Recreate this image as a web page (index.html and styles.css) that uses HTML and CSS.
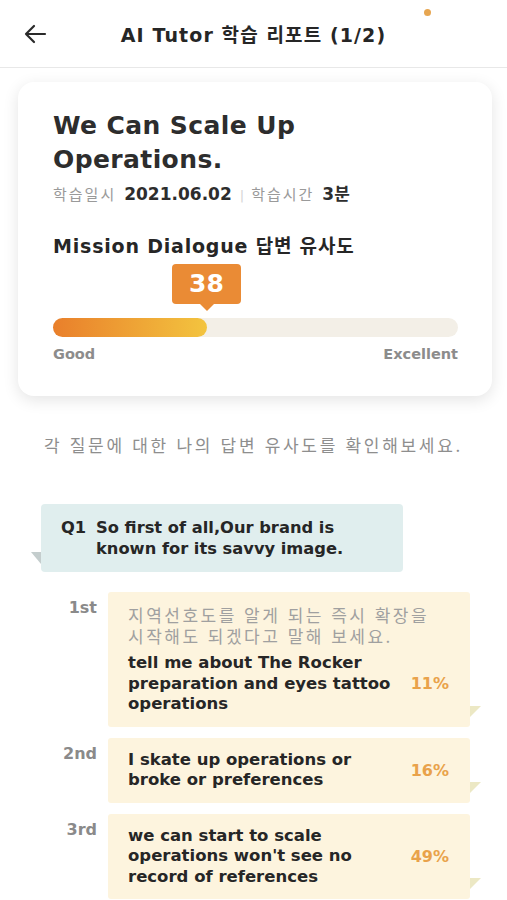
FILE: index.html
```html
<!DOCTYPE html>
<html lang="ko">
<head>
    <meta charset="UTF-8">
    <meta name="viewport" content="width=device-width, initial-scale=1.0">
    <title>AI Tutor 학습 리포트</title>
    <link rel="stylesheet" href="styles.css">
</head>
<body>
    <header class="topBar">
        <button class="backBtn" aria-label="back">
            <svg width="24" height="20" viewBox="0 0 24 20">
                <path d="M22 10H3M11 2L3 10l8 8" fill="none" stroke="#2a2a2a" stroke-width="2.2" stroke-linecap="round" stroke-linejoin="round"/>
            </svg>
        </button>
        <h1 class="topTitle">AI Tutor 학습 리포트 (1/2)</h1>
        <span class="statusDot"></span>
    </header>

    <section class="reportCard">
        <h2 class="lessonTitle">We Can Scale Up Operations.</h2>
        <div class="lessonMeta">
            <span class="metaLabel">학습일시</span>
            <span class="metaValue">2021.06.02</span>
            <span class="metaBar">|</span>
            <span class="metaLabel">학습시간</span>
            <span class="metaValue">3분</span>
        </div>

        <h3 class="scoreHeading">Mission Dialogue 답변 유사도</h3>
        <div class="meter" style="--score: 38%">
            <div class="badge">38</div>
            <div class="track">
                <div class="fill"></div>
            </div>
            <div class="meterLabels">
                <span>Good</span>
                <span>Excellent</span>
            </div>
        </div>
    </section>

    <p class="guide">각 질문에 대한 나의 답변 유사도를 확인해보세요.</p>

    <div class="question">
        <span class="qNum">Q1</span>
        <span class="qText">So first of all,Our brand is known for its savvy image.</span>
    </div>

    <div class="answers">
        <div class="answerRow">
            <span class="rank">1st</span>
            <div class="answerBox">
                <p class="hint">지역선호도를 알게 되는 즉시 확장을 시작해도 되겠다고 말해 보세요.</p>
                <div class="answerLine">
                    <span class="answerText">tell me about The Rocker preparation and eyes tattoo operations</span>
                    <span class="percent">11%</span>
                </div>
            </div>
        </div>
        <div class="answerRow">
            <span class="rank">2nd</span>
            <div class="answerBox">
                <div class="answerLine">
                    <span class="answerText">I skate up operations or broke or preferences</span>
                    <span class="percent">16%</span>
                </div>
            </div>
        </div>
        <div class="answerRow">
            <span class="rank">3rd</span>
            <div class="answerBox">
                <div class="answerLine">
                    <span class="answerText">we can start to scale operations won't see no record of references</span>
                    <span class="percent">49%</span>
                </div>
            </div>
        </div>
    </div>
</body>
</html>
```

FILE: styles.css
```css
*{
    margin: 0px;
    padding: 0px;
    box-sizing: border-box;
}
body{
    background: #ffffff;
    color: #2b2b2b;
    font-family: "DejaVu Sans", "Noto Sans CJK KR", sans-serif;
    width: 507px;
}

/* header */
.topBar{
    position: relative;
    height: 68px;
    display: flex;
    align-items: center;
    justify-content: center;
    border-bottom: 1px solid #e8e8e8;
}
.backBtn{
    position: absolute;
    left: 23px;
    top: 24px;
    background: none;
    border: none;
    display: flex;
}
.topTitle{
    font-size: 19px;
    font-weight: 700;
    color: #262626;
    letter-spacing: 1.1px;
    margin-top: -1px;
}
.statusDot{
    position: absolute;
    left: 424px;
    top: 9px;
    width: 7px;
    height: 7px;
    border-radius: 50%;
    background: #e7a651;
}

/* card */
.reportCard{
    margin: 14px 15px 0 18px;
    padding: 27px 34px 33px 35px;
    background: #ffffff;
    border-radius: 16px;
    box-shadow: 0 4px 16px rgba(0, 0, 0, 0.11);
}
.lessonTitle{
    font-size: 25px;
    font-weight: 700;
    line-height: 34px;
    letter-spacing: 0.4px;
    color: #2d2d2d;
    width: 300px;
}
.lessonMeta{
    margin-top: 6px;
    display: flex;
    align-items: baseline;
    line-height: 22px;
}
.metaLabel{
    font-family: "Noto Sans CJK KR", sans-serif;
    font-size: 15px;
    letter-spacing: 2px;
    color: #9a9a9a;
    margin-right: 8px;
}
.metaValue{
    font-size: 17px;
    font-weight: 700;
    color: #2d2d2d;
}
.metaBar{
    font-size: 13px;
    color: #d4d4d4;
    margin: 0 7px 0 8px;
}
.scoreHeading{
    margin-top: 27px;
    font-size: 19px;
    font-weight: 700;
    line-height: 24px;
    letter-spacing: 0.8px;
    color: #262626;
}

/* meter */
.meter{
    margin-top: 6px;
}
.badge{
    position: relative;
    width: 69px;
    height: 40px;
    margin-left: calc(var(--score) - 35px);
    background: #ea8b35;
    border-radius: 4px;
    color: #ffffff;
    font-size: 25px;
    font-weight: 700;
    line-height: 40px;
    text-align: center;
}
.badge::after{
    content: "";
    position: absolute;
    left: 28px;
    bottom: -7px;
    border-left: 7px solid transparent;
    border-right: 7px solid transparent;
    border-top: 7px solid #ea8b35;
}
.track{
    margin-top: 14px;
    height: 19px;
    border-radius: 10px;
    background: #f3efe7;
}
.fill{
    width: var(--score);
    height: 19px;
    border-radius: 10px;
    background: linear-gradient(to right, #e97f2b, #f3c43f);
}
.meterLabels{
    margin-top: 8px;
    display: flex;
    justify-content: space-between;
    font-size: 14.5px;
    font-weight: 700;
    line-height: 18px;
    color: #8c8c8c;
}

/* guide */
.guide{
    margin-top: 38px;
    text-align: center;
    font-family: "Noto Sans CJK KR", sans-serif;
    font-size: 17px;
    letter-spacing: 2.7px;
    line-height: 22px;
    color: #8e8e8e;
}

/* question */
.question{
    position: relative;
    margin: 48px 0 0 41px;
    width: 362px;
    padding: 13px 20px 13px 20px;
    background: #e0eeee;
    border-radius: 4px;
    display: flex;
    font-size: 16.3px;
    font-weight: 700;
    line-height: 21px;
    color: #262626;
}
.question::after{
    content: "";
    position: absolute;
    left: -10px;
    bottom: 8px;
    border-left: 10px solid transparent;
    border-top: 12px solid #c4cdcd;
}
.qNum{
    width: 35px;
    flex: none;
}
.qText{
    width: 270px;
}

/* answers */
.answers{
    margin: 20px 0 0 41px;
    display: flex;
    flex-direction: column;
    gap: 11px;
}
.answerRow{
    display: flex;
    gap: 11px;
}
.rank{
    width: 56px;
    flex: none;
    padding-top: 5px;
    text-align: right;
    font-size: 16px;
    font-weight: 700;
    line-height: 22px;
    color: #8a8a8a;
}
.answerBox{
    position: relative;
    width: 362px;
    padding: 12px 21px 12px 20px;
    background: #fdf4de;
    border-radius: 3px;
}
.answerBox::after{
    content: "";
    position: absolute;
    right: -11px;
    bottom: 10px;
    border-right: 11px solid transparent;
    border-top: 11px solid #ece8c4;
}
.hint{
    font-family: "Noto Sans CJK KR", sans-serif;
    font-size: 17px;
    letter-spacing: 2.5px;
    line-height: 21px;
    color: #a0a0a0;
    margin-bottom: 7px;
    width: 321px;
    word-break: keep-all;
}
.answerLine{
    display: flex;
    align-items: center;
}
.answerText{
    width: 264px;
    font-size: 16.5px;
    font-weight: 700;
    line-height: 20.5px;
    color: #262626;
}
.percent{
    margin-left: auto;
    font-size: 16px;
    font-weight: 700;
    color: #e9a24a;
}
```
